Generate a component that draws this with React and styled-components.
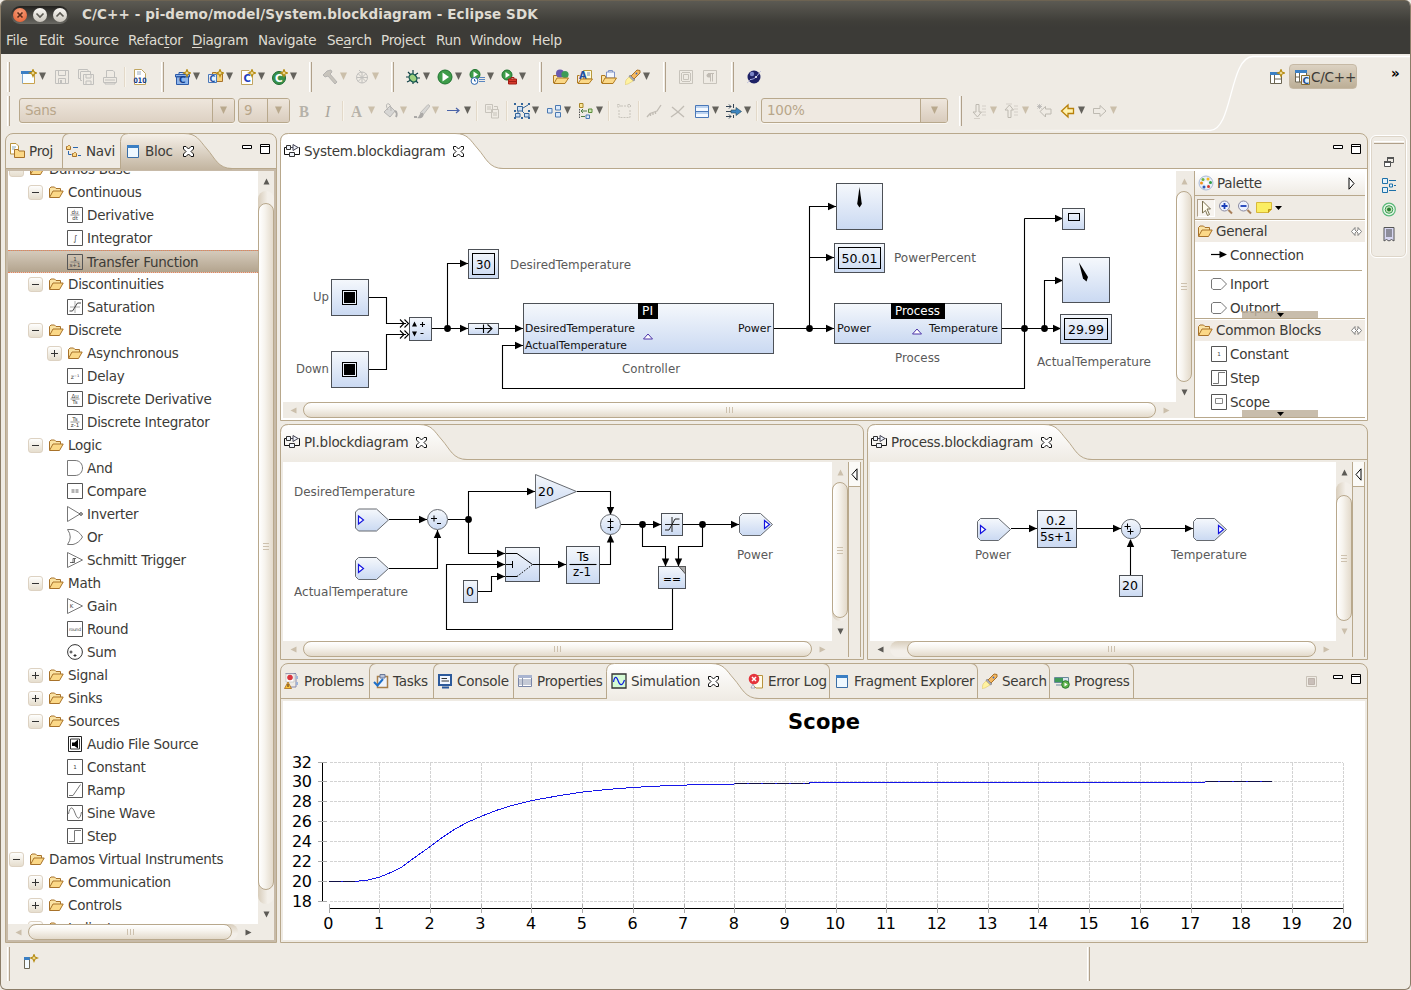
import React from "react";
import styled, { createGlobalStyle, css } from "styled-components";

const C = {
  bg: "#efebe4",
  line: "#b8a88c",
  tan: "#c7baa8",
  text: "#3c3b37",
  dark: "#3c3b37",
};

const Global = createGlobalStyle`
  html, body { margin: 0; padding: 0; background: ${C.bg}; overflow: hidden; }
  * { box-sizing: border-box; }
  body { font: 13.5px "DejaVu Sans", sans-serif; letter-spacing: -0.27px; color: ${C.text}; }
  svg { display: block; flex: none; letter-spacing: 0; }
`;

/* ---------- window frame ---------- */
const Window = styled.div`
  width: 1411px;
  height: 990px;
  border: solid #8b7d68;
  border-width: 0 1px 1px 1px;
  border-radius: 6px;
  background: ${C.bg};
  overflow: hidden;
  display: flex;
  flex-direction: column;
  white-space: nowrap;
`;
const TitleBar = styled.div`
  height: 28px;
  flex: none;
  display: flex;
  align-items: center;
  padding-left: 10px;
  gap: 13px;
  background: linear-gradient(#5c5a53, #3f3e39 75%, #3c3b37);
  border-top: 1px solid #6d6352;
  color: #dfdbd2;
  font-weight: bold;
  font-size: 13.5px;
  letter-spacing: 0.1px;
  > span { padding-bottom: 1px; }
`;
const WindowButtons = styled.div`
  width: 58px;
  height: 18px;
  border-radius: 9px;
  background: linear-gradient(#22211e, #6a6963);
  display: flex;
  align-items: center;
  justify-content: center;
  gap: 6px;
`;
const RoundButton = styled.div`
  width: 14px;
  height: 14px;
  border-radius: 50%;
  background: ${(p) => (p.$close ? "radial-gradient(circle at 50% 30%, #f7a07c, #e3592c)" : "linear-gradient(#fbf9f5, #c9c5bc)")};
`;
const MenuBar = styled.div`
  height: 26px;
  flex: none;
  display: flex;
  align-items: center;
  padding: 0 0 2px 5px;
  background: ${C.dark};
  color: #dfdbd2;
`;
const MenuItem = styled.div`
  width: ${(p) => p.$w}px;
  u { text-underline-offset: 2px; }
`;

/* ---------- tool bars ---------- */
const ToolArea = styled.div`
  position: relative;
  height: 79px;
  flex: none;
  padding: 7px 0 0 6px;
  display: flex;
  flex-direction: column;
  gap: 3px;
`;
const PerspectiveEdge = styled.svg`
  position: absolute;
  left: 0;
  top: 0;
`;
const ToolRow = styled.div`
  position: relative;
  height: 31px;
  display: flex;
  align-items: center;
`;
const ToolGroup = styled.div`
  width: ${(p) => p.$w}px;
  height: 31px;
  flex: none;
  display: flex;
  align-items: center;
`;
const Grip = styled.div`
  width: 3px;
  height: 30px;
  flex: none;
  border-left: 1px solid #fff;
  border-right: 1px solid #b0a08a;
  margin-right: ${(p) => p.$gap ?? 10}px;
`;
const Tool = styled.div`
  width: ${(p) => (p.$menu ? p.$menu : 24)}px;
  height: 24px;
  display: flex;
  align-items: center;
  gap: 1px;
  flex: none;
  opacity: ${(p) => (p.$off ? 0.66 : 1)};
`;
const Sep = styled.div`
  width: 1px;
  height: 20px;
  flex: none;
  margin: 0 7px 0 -2px;
  background: #e3d9c9;
  box-shadow: 1px 0 #f8f4ec;
`;
const ComboBox = styled.div`
  width: ${(p) => p.$w}px;
  height: 25px;
  flex: none;
  margin: 0 ${(p) => p.$gap}px 0 ${(p) => (p.$flat ? -3 : 0)}px;
  border: 1px solid ${C.line};
  border-radius: 3px;
  display: flex;
  background: ${(p) => (p.$flat ? "#efe9e1" : "linear-gradient(#eee6dc, #ddd1c3)")};
  box-shadow: 0 1px #faf7f2;
  color: #b8a68a;
  line-height: 23px;
  overflow: hidden;
`;
const ComboText = styled.div`
  flex: 1;
  padding-left: 5px;
`;
const ComboDrop = styled.div`
  width: ${(p) => p.$w}px;
  border-left: 1px solid ${C.line};
  background: linear-gradient(#eee6dc, #d9ccbd);
  display: grid;
  place-items: center;
`;
const PerspectiveBar = styled.div`
  margin-left: auto;
  display: flex;
  align-items: center;
  width: 141px;
`;
const PerspectiveButton = styled.div`
  width: 68px;
  height: 25px;
  margin: 0 34px 0 4px;
  border: 1px solid #c6b9a5;
  border-radius: 4px;
  background: linear-gradient(#dcd2c2, #bcae96);
  display: flex;
  align-items: center;
  padding-left: 4px;
  gap: 1px;
  letter-spacing: -0.2px;
`;
const Chevron = styled.div`
  color: #000;
  font-weight: bold;
  font-size: 13.5px;
  padding-bottom: 8px;
`;

/* ---------- work bench ---------- */
const Workbench = styled.div`
  flex: none;
  display: flex;
  padding-left: 4px;
`;
const Center = styled.div`
  width: 1088px;
  margin: 0 2px 0 3px;
  display: flex;
  flex-direction: column;
  gap: 3px;
`;
const SideBySide = styled.div`
  display: flex;
  gap: 3px;
`;
const Folder = styled.div`
  width: ${(p) => p.$w}px;
  height: ${(p) => p.$h}px;
  flex: none;
  border: 1px solid ${C.line};
  border-radius: 8px 8px 0 0;
  display: flex;
  flex-direction: column;
`;
const TabBar = styled.div`
  height: 35px;
  flex: none;
  display: flex;
  border-bottom: 1px solid ${C.line};
  position: relative;
`;
const Body = styled.div`
  flex: 1;
  min-height: 0;
  padding: 2px;
  background: ${(p) => p.$tone};
  display: flex;
`;
const Tab = styled.div`
  width: ${(p) => p.$w}px;
  height: 34px;
  flex: none;
  display: flex;
  align-items: center;
  gap: 4px;
  padding-left: ${(p) => p.$pad ?? 3}px;
  position: relative;
  overflow: ${(p) => (p.$side ? "hidden" : "visible")};
  ${(p) => p.$side && css`margin-top: -1px; height: 35px; border-top: 1px solid ${C.line};`}
  ${(p) => p.$side === "left" && css`border-left: 1px solid ${C.line}; border-radius: 7px 0 0 0;`}
  ${(p) => p.$side === "right" && css`border-right: 1px solid ${C.line}; border-radius: 0 7px 0 0;`}
  > * { position: relative; }
  > span { padding-bottom: 1px; }
`;
const TabBackdrop = styled.svg`
  && { position: absolute; }
  left: -1px;
  top: -1px;
`;
const CloseMark = styled.div`
  margin-left: ${(p) => p.$gap}px;
`;
const FolderButtons = styled.div`
  margin-left: auto;
  display: flex;
  gap: 8px;
  padding: 10px 6px 0 0;
  align-items: flex-start;
`;

/* ---------- scroll bars ---------- */
const Bar = styled.div`
  flex: none;
  background: ${C.bg};
  display: flex;
  flex-direction: ${(p) => (p.$v ? "column" : "row")};
  ${(p) => (p.$v ? "width: 16px;" : "height: 16px;")}
  ${(p) => p.$len && (p.$v ? `height: ${p.$len}px;` : `width: ${p.$len}px;`)}
`;
const BarEnd = styled.div`
  width: ${(p) => (p.$v ? 16 : 20)}px;
  height: ${(p) => (p.$v ? 20 : 16)}px;
  flex: none;
  display: grid;
  place-items: center;
`;
const Trough = styled.div`
  flex: 1;
  display: flex;
  flex-direction: ${(p) => (p.$v ? "column" : "row")};
  border-radius: 8px;
  background: linear-gradient(${(p) => (p.$v ? "to right" : "to bottom")}, #d8cdbb, #f3efe9 60%);
`;
const Thumb = styled.div`
  ${(p) => (p.$v ? `width: 16px; height: ${p.$size}px; margin-top: ${p.$at}px;` : `height: 16px; width: ${p.$size}px; margin-left: ${p.$at}px;`)}
  flex: none;
  border: 1px solid ${C.line};
  border-radius: 8px;
  background: linear-gradient(${(p) => (p.$v ? "to right" : "to bottom")}, #fff, #f7f4ee 40%, #e3dacb);
  display: flex;
  flex-direction: ${(p) => (p.$v ? "column" : "row")};
  gap: 2px;
  align-items: center;
  justify-content: center;
`;
const Ridge = styled.i`
  background: #cdc1ae;
  ${(p) => (p.$v ? "width: 6px; height: 1px;" : "width: 1px; height: 6px;")}
`;
const ARROWS = { up: "M.5 6.500L3.500 .5L6.500 6.500Z", down: "M.5 .5H6.500L3.500 6.500Z", left: "M6.500 .5V6.500L.5 3.500Z", right: "M.5 .5V6.500L6.500 3.500Z" };
const Tri = ({ dir, off }) => (
  <svg width="7" height="7"><path d={ARROWS[dir]} fill={off ? "#cbbfab" : "#5c5a55"} /></svg>
);
const Scroll = ({ v, len, at = 0, size, offA, offB }) => (
  <Bar $v={v} $len={len}>
    <BarEnd $v={v}><Tri dir={v ? "up" : "left"} off={offA} /></BarEnd>
    <Trough $v={v}>
      <Thumb $v={v} $size={size} $at={at}><Ridge $v={v} /><Ridge $v={v} /><Ridge $v={v} /></Thumb>
    </Trough>
    <BarEnd $v={v}><Tri dir={v ? "down" : "right"} off={offB} /></BarEnd>
  </Bar>
);

/* ---------- icons ---------- */
const Icon = ({ children, w = 16, h = 16 }) => <svg width={w} height={h} viewBox={`0 0 ${w} ${h}`} fill="none">{children}</svg>;
const Spark = ({ x = 12, y = 4 }) => (
  <path transform={`translate(${x} ${y})`} d="M0-3.500L1-1L3.500 0L1 1L0 3.500L-1 1L-3.500 0L-1-1Z" fill="#fff6c0" stroke="#b58a10" strokeWidth="1.1" />
);
const Down = ({ off }) => <svg width="9" height="9" viewBox="0 0 9 9"><path d="M1 .5H8L4.500 8Z" fill={off ? "#b9a98d" : "#64625c"} /></svg>;
const FolderOpen = () => (
  <Icon>
    <path d="M1.500 13V4.500L3 3h3.500L8 4.500h4.500V7" fill="#fbe3a4" stroke="#a8722a" />
    <path d="M1.500 13.500L5 7h10.200L11.500 13.500Z" fill="#fbd887" stroke="#a8722a" />
  </Icon>
);
const I = {
  new: <Icon><path d="M.5 2.500H13.500V14.500H1.500" fill="#f8fdff" stroke="#c9a24e" /><path d="M0 2H11V5H0Z" fill="#3b7fc4" /><path d="M1.500 5V14.500" stroke="#7da7d0" /><Spark x={12} y={4} /></Icon>,
  save: <Icon><path d="M1.500 1.500H14.500V14.500H1.500Z" stroke="#aaa" /><path d="M4.500 2V6.500H11.500V2M4.500 14V9.500H11.500V14" stroke="#aaa" /><path d="M6 11h2v3H6Z" fill="#aaa" /></Icon>,
  saveAll: <Icon><path d="M.5.5H9.500L10.500 2.500M.5.5V9.500H2M2.500 3V11.500H4M2.500 2.500H12.500V5" stroke="#aaa" /><path d="M5.500 5.500H15.500V15.500H5.500Z" stroke="#aaa" /><path d="M8 6V9H13V6M8 15V12H13V15" stroke="#aaa" /></Icon>,
  print: <Icon><path d="M4.500 8V1.500H11L12.500 3V8" stroke="#aaa" /><path d="M1.500 8.500H14.500V13.500H1.500Z" stroke="#aaa" /><path d="M3 13.500V15H13V13.500M3 11H13" stroke="#aaa" /></Icon>,
  bin: <Icon><path d="M2.500.5H9.500L13.500 4.500V15.500H2.500Z" fill="#fff" stroke="#c0a560" /><path d="M5 3h4M5 5h4" stroke="#9ab" /><text x="1.500" y="14" fontSize="7.500" fontWeight="bold" fill="#113a8a" textLength="13" lengthAdjust="spacingAndGlyphs">010</text></Icon>,
  cProj: <Icon><path d="M1.500 7.500H13.500V15.500H1.500ZM.5 5.500H14.500V8H.5Z" fill="#8db4ea" stroke="#2c5aa8" /><path d="M4 3.500H9V5.500H4Z" fill="#cfe1f8" stroke="#2c5aa8" /><text x="4" y="14" fontSize="9" fontWeight="bold" fill="#153e8a">C</text><Spark x={12} y={4} /></Icon>,
  cFolder: <Icon><path d="M4.500 11V3.500H8L9 5H14.500V12.500H8" fill="#f8d27a" stroke="#a8722a" /><path d="M.5 5.500H8.500V13.500H.5Z" fill="#e6f0fc" stroke="#4b78b8" /><text x="1.500" y="12.500" fontSize="8" fontWeight="bold" fill="#1d4fa0">C</text><Spark x={12} y={4} /></Icon>,
  cFile: <Icon><path d="M1.500 1.500H9L12.500 5V15.500H1.500Z" fill="#fff" stroke="#c0a560" /><text x="3.500" y="13" fontSize="10" fontWeight="bold" fill="#1d3fc0">C</text><Spark x={12} y={4} /></Icon>,
  cClass: <Icon><circle cx="7" cy="9" r="6.500" fill="#37904a" stroke="#1d6b31" /><text x="3" y="13" fontSize="10.500" fontWeight="bold" fill="#fff">C</text><Spark x={12} y={4} /></Icon>,
  hammer: <Icon><path d="M1 6L5 2L9 1L10 3L8 5L15 13L13 15L6 7L3 8Z" fill="#b5b0a8" stroke="#999" /></Icon>,
  world: <Icon><circle cx="8" cy="8.500" r="5.500" stroke="#aaa" /><path d="M4 4.500L12 12.500M4 12.500L12 4.500M8 3V14M2.500 8.500H14M5 1L8 4" stroke="#aaa" /></Icon>,
  bug: <Icon><path d="M3 3L6 6M8 1V5M13 4L10 6M1 8H5M15 9H11M2 13L6 11M13 14L10 11M8 15V11" stroke="#123f46" strokeWidth="1.200" /><ellipse cx="8" cy="9" rx="3.500" ry="4.300" transform="rotate(-40 8 9)" fill="#9ed07e" stroke="#155a50" strokeWidth="1.300" /></Icon>,
  run: <Icon><circle cx="8" cy="8" r="7" fill="#3d9c48" stroke="#1f7330" /><path d="M5.500 3.500L12 8L5.500 12.500Z" fill="#fff" /></Icon>,
  runHist: <Icon><circle cx="6" cy="5.500" r="5" fill="#3d9c48" stroke="#1f7330" /><path d="M4.500 2.500L9 5.500L4.500 8.500Z" fill="#fff" /><circle cx="5.500" cy="12" r="3.400" fill="#fff" stroke="#2a66ae" /><path d="M5.500 10V12H7" stroke="#2a66ae" /><path d="M10 8.500H16M10 10.500H16M10 12.500H16" stroke="#5a86c0" /></Icon>,
  runExt: <Icon><circle cx="6" cy="6" r="5" fill="#3d9c48" stroke="#1f7330" /><path d="M4.500 3L9 6L4.500 9Z" fill="#fff" /><path d="M7.500 10H15.500V15H7.500Z" fill="#d63a2c" stroke="#a01d14" /><path d="M10 10V8.500H13V10M8 12.500H15" stroke="#a01d14" /></Icon>,
  openType: <Icon><path d="M.5 14V6.500H4L5 8" fill="#fbe3a4" stroke="#b07a20" /><circle cx="7" cy="4.500" r="4" fill="#6a5ab0" /><circle cx="12" cy="5.500" r="3.600" fill="#3d9c58" /><path d="M1 14.500L4 9H15.500L12 14.500Z" fill="#fbd887" stroke="#b07a20" /></Icon>,
  openTask: <Icon><path d="M6.500 1.500H14.500V10H6.500Z" fill="#fffbe0" stroke="#b8993c" /><text x="2" y="10" fontSize="10" fontWeight="bold" fill="#1d4fa0">A</text><path d="M10 4h3M10 6h3" stroke="#6d8fc0" /><path d="M1 14.500L4 10H15.500L12 14.500Z" fill="#fbd887" stroke="#b07a20" /><path d="M.5 14V6.500H2.500" stroke="#b07a20" /></Icon>,
  openRes: <Icon><path d="M.5 14V6.500H4L5 9" fill="#fbe3a4" stroke="#b07a20" /><path d="M5.500 3H13.500V9H5.500Z" fill="#f3f6fd" stroke="#7f93c8" /><path d="M7.500 3V1.500H11.500V3" stroke="#7f93c8" /><path d="M1 14.500L4 9H15.500L12 14.500Z" fill="#fbd887" stroke="#b07a20" /></Icon>,
  torch: <Icon><path d="M6 7L12 1L15 1.500L15 4L9 10Z" fill="#f5b860" stroke="#a8722a" /><path d="M5 6L10 11L8 12L4 8Z" fill="#a9a9b4" stroke="#777" strokeWidth=".6" /><path d="M4 8L8 12L3 15L0 15.500L1 11Z" fill="#fff2a0" stroke="#d8c060" strokeWidth=".5" /><circle cx="11.500" cy="4.500" r=".9" fill="#3b6bc0" /></Icon>,
  block: <Icon><path d="M1.500 1.500H14.500V14.500H1.500Z" stroke="#b3afa6" /><path d="M5.500 5.500H10.500V10.500H5.500ZM4 3.500H12M4 12.500H12M3.500 4V12M12.500 4V12" stroke="#b3afa6" /></Icon>,
  para: <Icon><path d="M1.500 1.500H14.500V14.500H1.500Z" stroke="#b3afa6" /><path d="M9 4.500H6.500A2 2 0 0 0 6.500 8.500H8Z" fill="#aaa59c" /><path d="M6 4.500H12M8.500 4.500V12.500M10.500 4.500V12.500" stroke="#aaa59c" /></Icon>,
  sphere: <Icon><circle cx="8" cy="8" r="6.500" fill="#1f2266" /><circle cx="6" cy="5" r="2.200" fill="#7b86c8" /><path d="M1 14L4 11.500M12.500 4.500L15 2" stroke="#c5c5dc" /><path d="M4 10.500C7 10.500 10 9 12.500 5" stroke="#b0b6e8" /><circle cx="10" cy="8" r="1" fill="#fff" /></Icon>,
  bold: <Icon><text x="3" y="13.500" fontFamily="Liberation Serif" fontWeight="bold" fontSize="16" textLength="10" lengthAdjust="spacingAndGlyphs" fill="#9a958c">B</text></Icon>,
  italic: <Icon><text x="5" y="13.500" fontFamily="Liberation Serif" fontStyle="italic" fontSize="16" fill="#87837a">I</text></Icon>,
  fontA: <Icon><text x="1" y="13.500" fontFamily="Liberation Serif" fontWeight="bold" fontSize="16" textLength="11" lengthAdjust="spacingAndGlyphs" fill="#9a958c">A</text></Icon>,
  fill: <Icon><path d="M2 9L8 3L13 8L8 14Z" fill="#ccc" stroke="#999" /><path d="M6 7C3 2 5 0 7 1S9 6 9 8" stroke="#999" /><path d="M13 8C15 9 15 12 14 14" stroke="#888" strokeWidth="2" /></Icon>,
  brush: <Icon><path d="M6 10L14 1.500L16 3L9 12Z" fill="#ccc" stroke="#999" strokeWidth=".8" /><path d="M9 10C5 9 6 14 3 15C7 16 11 14 9 10Z" fill="#888" /><path d="M0 14H3" stroke="#888" strokeWidth="2" /></Icon>,
  lineStyle: <Icon><path d="M1 7.500H13M10 5L13 7.500L10 10" stroke="#4a63a8" strokeWidth="1.200" /></Icon>,
  copyApp: <Icon><path d="M1.500 1.500H8.500V9.500H1.500ZM7.500 6.500H14.500V15H7.500ZM3 4H7M3 6H7M9 10H13M9 12H13M10 3.500H13.500V6" stroke="#b3afa6" /></Icon>,
  select: <Icon><path d="M8 8L11 11M9 5L14 2M4 8L4 10" stroke="#34659a" /><path d="M3.500 3.500H8.500V8H3.500ZM1.500 10.500H6V14H1.500ZM10.500 10.500H15V14H10.500Z" fill="#cfe0f4" stroke="#34659a" /><path d="M0 0h2v2H0ZM14 0h2v2h-2ZM0 14h2v2H0ZM14 14h2v2h-2ZM7 0h2v2H7ZM0 7h2v2H0ZM14 7h2v2h-2ZM7 14h2v2H7Z" fill="#34659a" /></Icon>,
  arrange: <Icon><path d="M1.500 5.500H6V10H1.500ZM9.500 2.500H14.500V7H9.500ZM9.500 9.500H14.500V14H9.500Z" fill="#dbe9fa" stroke="#4a78b0" /></Icon>,
  align: <Icon><path d="M1.500.5H5V4.500H1.500Z" fill="#fbe79a" stroke="#a8862a" /><path d="M10.500 6H14V9.500H10.500Z" fill="#cbe6b0" stroke="#5a8a3a" /><path d="M8 12H11.500V15.500H8Z" fill="#dbe9fa" stroke="#4a78b0" /><path d="M1.500 6V16" stroke="#555" strokeDasharray="1.500 1" /><path d="M3 8H9M3 13.500H7M5 6L3 8L5 10" stroke="#4f7f45" /></Icon>,
  autosize: <Icon><path d="M1.500 1.500H4V4H1.500ZM12 1.500H14.500V4H12ZM3 7V14.500H14V7" stroke="#b3afa6" strokeDasharray="2 1" /><path d="M5 3H12" stroke="#b3afa6" strokeDasharray="2 1" /></Icon>,
  route1: <Icon><path d="M1 14L4 10.500L11 8L15 2M4.500 13V10.500M7 12V9.500M9.500 11V8.500" stroke="#aaa59c" strokeWidth="1.300" /></Icon>,
  route2: <Icon><path d="M2 4L14 14M1 14L8 9L14 3" stroke="#aaa59c" strokeWidth="1.300" /></Icon>,
  compart: <Icon><path d="M1.500 2.500H14.500V14.500H1.500ZM1.500 8.500H14.500" fill="#f4f9ff" stroke="#4a78b8" /><path d="M2 3H14V5H2ZM2 9H14V11H2Z" fill="#bcd3f0" /></Icon>,
  routing: <Icon><path d="M0 3.500H5M3 1.500L5 3.500L3 5.500M0 8.500H8M0 13.500H5M3 11.500L5 13.500L3 15.500M7.500 1V5M7.500 12V15" stroke="#345" /><path d="M5 7H10V4.500L15.500 8.500L10 12.500V10H5Z" fill="#3f86c0" stroke="#245" strokeWidth=".6" /></Icon>,
  nextAnn: <Icon><path d="M4 1.500H7V9H9.500L5.500 14L1 9H4Z" stroke="#a5a198" /><path d="M10 3H14M10 6H14M10 9H14M10 12H14M2 15.500H8" stroke="#c8c3ba" /></Icon>,
  prevAnn: <Icon><path d="M4 14.500H7V7H9.500L5.500 2L1 7H4Z" stroke="#a5a198" /><path d="M10 3H14M10 6H14M10 9H14M10 12H14M2 1H8" stroke="#c8c3ba" /></Icon>,
  lastEdit: <Icon><path d="M15 6V11H9.500V14L4 8.500L9.500 3.500V6Z" stroke="#a5a198" /><path d="M3.500 1V6M1 3.500H6M1.500 1.500L5.500 5.500M5.500 1.500L1.500 5.500" stroke="#999" strokeWidth=".8" /></Icon>,
  back: <Icon><path d="M13.500 5.500V10.500H8V14L1.500 8L8 2V5.500Z" fill="#fff3b0" stroke="#b8800a" strokeWidth="1.300" /></Icon>,
  forward: <Icon><path d="M1.500 5.500V10.500H8V13.500L14 8L8 2.500V5.500Z" stroke="#a5a198" /></Icon>,
  openPersp: <Icon><path d="M1.500 4H12.500V14.500H1.500Z" fill="#fff" stroke="#6b6552" /><path d="M1 3H12V6H1Z" fill="#3b7fc4" /><path d="M5.500 6V14M5.500 10H12" stroke="#6b6552" /><Spark x={12} y={4} /></Icon>,
  cPersp: <Icon><path d="M1.500 1.500H12.500V13H1.500Z" fill="#fff" stroke="#6b6552" /><path d="M1 1H13V4H1Z" fill="#3b7fc4" /><path d="M5.500 4V13M1.500 8H6" stroke="#6b6552" /><path d="M7.500 6.500H15.500V15.500H7.500Z" fill="#e4f0fc" stroke="#8a6d2c" /><text x="8.500" y="14.500" fontSize="9" fontWeight="bold" fill="#1d4f90">C</text></Icon>,
  proj: <Icon><path d="M1.500.5H7L9.500 3V11H1.500Z" fill="#fff" stroke="#b8933c" /><path d="M3 4H7M3 6H6" stroke="#8ab" /><path d="M5.500 14.500V6.500H9L10 8H15.500V14.500Z" fill="#fbd887" stroke="#a8722a" /></Icon>,
  navi: <Icon><path d="M.5 3.500H1.500L2.500 2.500H3.500L4.500 3.500V6.500H.5ZM6.500 10.500H7.500L8.500 9.500H9.500L10.500 10.500V13.500H6.500Z" fill="#fbd887" stroke="#a8722a" /><path d="M2.500 8V11.500H5.500M7 4.500H12M12 12.500H15" stroke="#2a66ae" /></Icon>,
  view: <Icon><path d="M2.500 2.500H13.500V14.500H2.500Z" fill="#eef8ff" stroke="#3a6ea5" /><path d="M2 2H14V5H2Z" fill="#3b7fc4" /></Icon>,
  diagram: <Icon><path d="M2 4.500H.5V11.500H5.500M14.500 4.500H15.500V11.500H10.500" stroke="#111" /><path d="M2.500 2.500H6.500V6.500H2.500ZM5.500 9.500H10.500V13.500H5.500Z" fill="#f0f4fb" stroke="#333" /><path d="M9 1.500L14 4.500L9 7.500ZM6.500 4.500H9" fill="#f0f4fb" stroke="#445" /></Icon>,
  problems: <Icon><path d="M1.500.5H12M12 1V14H4" stroke="#88a" /><path d="M2 1H10V9H2Z" fill="#fff" stroke="#bbb" strokeWidth=".7" /><circle cx="6" cy="4.500" r="2.800" fill="#d9363e" /><path d="M4 9L7.500 15.500H.5Z" fill="#f9c43a" stroke="#a86a1a" strokeWidth=".8" /><path d="M4 11V14" stroke="#422" /><path d="M12 3H14V6H12ZM12 9H14V12H12Z" fill="#9fb4d8" /></Icon>,
  tasks: <Icon><path d="M4.500 3.500H14.500V14.500H4.500Z" fill="#eef3fb" stroke="#a87f4a" strokeWidth="1.500" /><path d="M7 1.500H12V5H7Z" fill="#b8c2d8" stroke="#6a7898" /><path d="M1 9L4.500 12.500L10 6" stroke="#1d6fc8" strokeWidth="2" /></Icon>,
  console: <Icon><path d="M2 2H14V12H2Z" fill="#f2f7ff" stroke="#2d5a9b" strokeWidth="2" /><path d="M4.500 5.500H10M4.500 8H12" stroke="#333" /><path d="M5 14.500H12" stroke="#2d5a9b" strokeWidth="2" /></Icon>,
  props: <Icon><path d="M1.500 2.500H14.500V13.500H1.500Z" fill="#fff" stroke="#7a86a8" /><path d="M1 2H15V5H1Z" fill="#a9b4d0" /><path d="M2 7H14M2 9H14M2 11H14M5.500 5V13.500" stroke="#8a94ac" /></Icon>,
  sim: <Icon><path d="M1 1H15V15H1Z" fill="#d5fbd5" stroke="#333" strokeWidth="1.300" /><path d="M2.500 9C3.500 3 5.500 3 7 7.500S11 14 13.500 7" stroke="#1020e0" strokeWidth="1.200" /></Icon>,
  error: <Icon><path d="M7.500 2.500H14.500V15H8L5 12" fill="#fffbe8" stroke="#b8933c" /><circle cx="6" cy="6" r="5.300" fill="#e5343c" /><path d="M4 4L8 8M8 4L4 8" stroke="#fff" strokeWidth="1.500" /><path d="M5 11L7 15H3Z" fill="#fff" stroke="#88a" strokeWidth=".7" /></Icon>,
  progress: <Icon><path d="M.5 4.500H14.500V9.500H.5Z" fill="#dce6f0" stroke="#6a8a9a" /><path d="M1 5H9V9H1Z" fill="#3f9a58" /><path d="M2 12H8" stroke="#6a8a9a" /><circle cx="11.500" cy="11.500" r="3.800" fill="#5fb34a" stroke="#2b7a30" /><path d="M10.500 9.500L13.500 11.500L10.500 13.500Z" fill="#fff" /></Icon>,
  palette: <Icon><circle cx="8" cy="8" r="7" fill="#e9eff8" stroke="#a9bad6" /><circle cx="5" cy="4.500" r="1.500" fill="#6db33f" /><circle cx="10" cy="4" r="1.500" fill="#f5b81c" /><circle cx="12.500" cy="7.500" r="1.500" fill="#2f9e44" /><circle cx="3.500" cy="8" r="1.500" fill="#f5921c" /><circle cx="6" cy="12" r="1.500" fill="#2b5ab8" /><circle cx="10.500" cy="11.500" r="1.500" fill="#d33a2c" /><circle cx="8" cy="8" r="1.800" fill="#fff" /></Icon>,
  cursor: <Icon><path d="M4.500 1L12.500 9H9L11.500 14.500L9.500 15.500L7.500 10.500L4.500 13Z" fill="#fffdf0" stroke="#7a7050" /></Icon>,
  zoomIn: <Icon><circle cx="6.500" cy="6" r="5" fill="#eef3ff" stroke="#8a8aa0" /><path d="M6.500 3V9M3.500 6H9.500" stroke="#1a3fb8" strokeWidth="1.800" /><path d="M10.500 10L14 13.500" stroke="#a8805a" strokeWidth="2" /></Icon>,
  zoomOut: <Icon><circle cx="6.500" cy="6" r="5" fill="#eef3ff" stroke="#8a8aa0" /><path d="M3.500 6H9.500" stroke="#1a3fb8" strokeWidth="1.800" /><path d="M10.500 10L14 13.500" stroke="#a8805a" strokeWidth="2" /></Icon>,
  note: <Icon><path d="M.5 2.500H15.500V9L12.500 12.500H.5Z" fill="#fbee62" stroke="#d8b83a" /><path d="M15.500 9.500H12.500V12.500" fill="#d8b020" stroke="#b8901a" /></Icon>,
  connection: <Icon><path d="M0 7.500H9" stroke="#000" strokeWidth="1.200" /><path d="M8.500 4L16 7.500L8.500 11Z" fill="#000" /></Icon>,
  port: <Icon><path d="M2 2.500H10L15.500 8L10 13.500H2L.5 12V4Z" fill="#fff" stroke="#777" /></Icon>,
  restore: <Icon><path d="M6.500 3.500H12.500V8.500H6.500Z" stroke="#555" /><path d="M6 4H13" stroke="#555" strokeWidth="2" /><path d="M3.500 7.500H9.500V12.500H3.500Z" fill="#fff" stroke="#555" /><path d="M3 8H10" stroke="#555" strokeWidth="2" /></Icon>,
  outline: <Icon><path d="M1.500.5H6.500V5.500H1.500ZM1.500 9.500H6.500V14.500H1.500ZM8.500 6H11.500V9H8.500Z" fill="#e2f1fb" stroke="#1d70a8" /><path d="M8 2.500H15M8 12.500H15M13 7.500H15" stroke="#1d70a8" strokeWidth="1.200" /></Icon>,
  target: <Icon><circle cx="8" cy="7.500" r="6.300" fill="#e8f7ea" stroke="#5ab878" strokeWidth="1.200" /><circle cx="8" cy="7.500" r="3.800" fill="#c9e8c0" stroke="#3a9a50" /><circle cx="8" cy="7.500" r="2" fill="#2b7d30" /></Icon>,
  doc: <Icon><path d="M3 1.500H13V15L10.500 13.500L8 15L5.500 13.500L3 15Z" fill="#d7d6f0" stroke="#555" /><path d="M5 4H11M5 6H11M5 8H11M5 10H11" stroke="#444" /></Icon>,
};

const Sq = ({ children }) => <Icon><path d="M.5.5H15.500V15.500H.5Z" stroke="#555" />{children}</Icon>;
const tiny = { fontSize: 5.5, fill: "#444", textAnchor: "middle" };
const frac = (a, b) => <Sq><text x="8" y="6.500" {...tiny}>{a}</text><path d="M3.500 8H12.500" stroke="#777" strokeWidth=".8" /><text x="8" y="13.300" {...tiny}>{b}</text></Sq>;
const B = {
  derivative: frac("du", "dt"),
  integrator: <Sq><text x="8" y="11" {...tiny} fontSize="8">∫</text></Sq>,
  transfer: frac("1", "s+1"),
  saturation: <Sq><path d="M8 2V14M3 8H13" stroke="#888" strokeWidth=".7" /><path d="M2.500 12H5.500L10.500 4H14" stroke="#444" /></Sq>,
  delay: <Sq><text x="8" y="11" {...tiny} fontSize="6">z⁻¹</text></Sq>,
  dDer: frac("Δu", "Ts"),
  dInt: frac("Ts", "z-1"),
  and: <Icon><path d="M.5.500H8C18 .5 18 15.500 8 15.500H.5Z" stroke="#777" /></Icon>,
  compare: <Sq><path d="M4.500 7H7.500M8.500 7H11.500M4.500 9H7.500M8.500 9H11.500" stroke="#555" strokeWidth=".9" /></Sq>,
  inverter: <Icon><path d="M.5.500L13 8L.5 15.500Z" stroke="#777" /><circle cx="14" cy="8" r="1.300" stroke="#444" /></Icon>,
  or: <Icon><path d="M.5.500H6Q12 2 15.500 8Q12 14 6 15.500H.5Q6 8 .5.500Z" stroke="#777" /></Icon>,
  schmitt: <Icon><path d="M.5.500L15.500 8L.5 15.500Z" stroke="#777" /><path d="M3 10.500H6V6.500H9M5 10.500H7.500V6.500" stroke="#444" strokeWidth=".8" /></Icon>,
  gain: <Icon><path d="M.5.500L15.500 8L.5 15.500Z" stroke="#777" /><text x="4.500" y="10" {...tiny}>K</text></Icon>,
  round: <Sq><text x="8" y="9.500" {...tiny} fontSize="4.500" textLength="12">round</text></Sq>,
  sum: <Icon><circle cx="8" cy="8" r="7.400" stroke="#333" /><path d="M2.500 8H5.500M4 6.500V9.500M6.500 11.500H9.500M8 10V13" stroke="#333" /></Icon>,
  audio: <Icon><path d="M1.500.500H14.500V15.500H1.500Z" stroke="#222" /><path d="M3.500 3H12.500V13H3.500Z" stroke="#333" /><path d="M5 6.500H7.500L11 3.500V12.500L7.500 10H5Z" fill="#000" /></Icon>,
  constant: <Sq><text x="8" y="10" {...tiny}>1</text></Sq>,
  ramp: <Sq><path d="M2 13.500H6L13.500 2.500" stroke="#777" /></Sq>,
  sine: <Sq><path d="M1.500 9C3 1 5.500 1 8 8S13 15 14.500 7" stroke="#777" /></Sq>,
  step: <Sq><path d="M2 13.500H7.500V2.500H14" stroke="#777" /></Sq>,
  scope: <Sq><path d="M4.500 4.500H11.500V9.500H4.500Z" stroke="#888" /></Sq>,
};

const CloseIcon = () => (
  <Icon w={11} h={11}><path d="M.5.500H3L5.500 3L8 .5H10.500V3L8 5.500L10.500 8V10.500H8L5.500 8L3 10.500H.5V8L3 5.500L.5 3Z" fill="#fff" stroke="#111" /></Icon>
);
const MinIcon = () => <Icon w={10} h={11}><path d="M.5 1.500H9.500V4.500H.5Z" fill="#fff" stroke="#000" /></Icon>;
const MaxIcon = () => <Icon w={10} h={11}><path d="M.5.500H9.500V9.500H.5Z" fill="#fff" stroke="#000" /><path d="M0 2.500H10" stroke="#000" /></Icon>;

const GRADS = { white: ["#ffffff", "#ffffff"], plain: ["#ffffff", "#efebe4"], tan: ["#f6f1ea", "#c2b49f"] };
const ActiveTab = ({ w, flat, tone, icon, label, closeGap, first, pad }) => {
  const id = `tab-${tone}-${label.length}`;
  const d = `C${flat + 13} .5 ${flat + 15} 7 ${flat + 23} 16S${flat + 34} 35.500 ${flat + 48} 35.500`;
  return (
    <Tab $w={w} $pad={pad}>
      <TabBackdrop width={flat + 50} height="37" fill="none">
        <defs><linearGradient id={id} x2="0" y2="1"><stop stopColor={GRADS[tone][0]} /><stop offset="1" stopColor={GRADS[tone][1]} /></linearGradient></defs>
        <path d={`M.5 37V8.500Q.5.500 8.500.500H${flat}${d}V37Z`} fill={`url(#${id})`} />
        <path d={`M.5 ${first ? 37 : 36}V8.500Q.5.500 8.500.500H${flat}${d}`} stroke={C.line} />
      </TabBackdrop>
      {icon}<span>{label}</span>
      <CloseMark $gap={closeGap}><CloseIcon /></CloseMark>
    </Tab>
  );
};

/* ---------- tree ---------- */
const Column = styled.div`
  display: flex;
  flex-direction: column;
  flex: ${(p) => (p.$w ? "none" : 1)};
  width: ${(p) => (p.$w ? `${p.$w}px` : "auto")};
  min-width: 0;
  background: ${C.bg};
`;
const Tree = styled.div`
  height: 753px;
  overflow: hidden;
  background: #fff;
`;
const TreeRows = styled.div`
  margin-top: -13px;
`;
const TreeRow = styled.div`
  height: 23px;
  display: flex;
  align-items: center;
  padding: 0 0 1px ${(p) => p.$level * 19 + 1}px;
  ${(p) => p.$on && css`background: linear-gradient(#d5cabb, #b3a48e); border: dotted #e8825c; border-width: 1px 0; padding-bottom: 0;`}
  > svg { margin-right: 4px; }
`;
const Expander = styled.div`
  width: 15px;
  height: 15px;
  margin-right: 5px;
  border-radius: 3px;
  display: grid;
  place-items: center;
  ${(p) => !p.$none && "border: 1px solid #ddd2c2; background: linear-gradient(#fefefd, #e6dece);"}
`;
const TREE = [
  [0, "-", "Damos Base"], [1, "-", "Continuous"], [2, "derivative", "Derivative"], [2, "integrator", "Integrator"], [2, "transfer", "Transfer Function"],
  [1, "-", "Discontinuities"], [2, "saturation", "Saturation"], [1, "-", "Discrete"], [2, "+", "Asynchronous"], [2, "delay", "Delay"],
  [2, "dDer", "Discrete Derivative"], [2, "dInt", "Discrete Integrator"], [1, "-", "Logic"], [2, "and", "And"], [2, "compare", "Compare"],
  [2, "inverter", "Inverter"], [2, "or", "Or"], [2, "schmitt", "Schmitt Trigger"], [1, "-", "Math"], [2, "gain", "Gain"], [2, "round", "Round"],
  [2, "sum", "Sum"], [1, "+", "Signal"], [1, "+", "Sinks"], [1, "-", "Sources"], [2, "audio", "Audio File Source"], [2, "constant", "Constant"],
  [2, "ramp", "Ramp"], [2, "sine", "Sine Wave"], [2, "step", "Step"], [0, "-", "Damos Virtual Instruments"], [1, "+", "Communication"],
  [1, "+", "Controls"], [1, "+", "Indicators"],
];

/* ---------- palette ---------- */
const Canvas = styled.svg`
  background: #fff;
`;
const PaletteBox = styled.div`
  width: 171px;
  border-left: 1px solid ${C.line};
  margin-left: 2px;
  display: flex;
  flex-direction: column;
  background: #fff;
  box-shadow: -2px 0 ${C.bg};
`;
const PaletteTitle = styled.div`
  height: 25px;
  flex: none;
  display: flex;
  align-items: center;
  gap: 3px;
  padding: 0 10px 0 3px;
  background: linear-gradient(#fff, #efebe4);
  border-bottom: 1px solid ${C.line};
  > :last-child { margin-left: auto; }
`;
const PaletteTools = styled.div`
  height: 24px;
  flex: none;
  display: flex;
  align-items: center;
  padding-left: 2px;
  gap: 3px;
  background: ${C.bg};
  border-bottom: 1px solid ${C.line};
`;
const PressedTool = styled.div`
  width: 18px;
  height: 18px;
  border: 1px solid;
  border-color: #b0a08a #fff #fff #b0a08a;
  background: #f7f4ef;
`;
const Drawer = styled.div`
  position: relative;
  height: ${(p) => p.$h}px;
  flex: none;
  overflow: hidden;
  border-bottom: 1px solid ${C.line};
`;
const DrawerTitle = styled.div`
  height: 21px;
  margin-top: 1px;
  display: flex;
  align-items: center;
  gap: 3px;
  padding: 0 3px 1px 2px;
  background: #f1ece5;
  > :last-child { margin-left: auto; }
`;
const PaletteItem = styled.div`
  height: 24px;
  margin-top: ${(p) => p.$mt || 0}px;
  display: flex;
  align-items: center;
  gap: 3px;
  padding-left: 16px;
`;
const PaletteRule = styled.div`
  height: 1px;
  margin: 3px 3px 1px;
  background: ${C.line};
`;
const DrawerScroll = styled.div`
  position: absolute;
  left: 47px;
  bottom: 0;
  width: 76px;
  height: 7px;
  background: rgba(190, 178, 158, 0.85);
  display: grid;
  place-items: center;
`;
const Pin = () => <Icon w={11} h={9}><path d="M4 .5L.5 4.500L4 8.500V6L5.500 4.500L4 3ZM7 .5L10.500 4.500L7 8.500V6L5.500 4.500L7 3Z" fill="#fff" stroke="#777" strokeWidth=".9" /></Icon>;
const SmallDown = () => <Icon w={7} h={4}><path d="M0 0H7L3.500 4Z" fill="#000" /></Icon>;
const Flyout = styled.div`
  width: 13px;
  flex: none;
  border: solid ${C.line};
  border-width: 0 1px;
  background: ${C.bg};
`;
const FlyoutButton = styled.div`
  height: 25px;
  background: #fbfaf7;
  border-bottom: 1px solid ${C.line};
  display: grid;
  place-items: center;
`;

/* ---------- right trim and status line ---------- */
const Trim = styled.div`
  width: 37px;
  height: 123px;
  margin-top: 2px;
  border: 1px solid #fff;
  border-radius: 6px;
  box-shadow: inset 0 0 0 1px #ddd5c8;
  display: flex;
  flex-direction: column;
  align-items: center;
`;
const TrimGrip = styled.div`
  width: 30px;
  height: 3px;
  margin: 5px 0 6px;
  border-top: 1px solid #fff;
  border-bottom: 1px solid #b0a08a;
`;
const TrimItem = styled.div`
  height: 24px;
  display: flex;
  align-items: center;
`;
const StatusBar = styled.div`
  flex: 1;
  display: flex;
  padding: 4px 0 0 6px;
`;
const StatusGrip = styled(Grip)`
  height: 34px;
  margin-right: 0;
`;
const StatusSlot = styled.div`
  width: 1077px;
  padding: 7px 0 0 13px;
`;

/* ---------- diagram primitives ---------- */
const T = ({ x, y, w, s = 12, fill = "#5a5a5a", children, anchor }) => (
  <text x={x} y={y} fontSize={s} fill={fill} textLength={w} lengthAdjust="spacingAndGlyphs" textAnchor={anchor} stroke="none">{children}</text>
);
const Blk = ({ x, y, w, h, g }) => <rect x={x} y={y} width={w} height={h} fill={`url(#${g})`} stroke="#4d5157" />;
const Wire = ({ d }) => <path d={d} stroke="#000" fill="none" strokeWidth="1.100" />;
const HEAD = { r: "M0 0L-8-3.700V3.700Z", d: "M0 0L-3.700-8H3.700Z", u: "M0 0L-3.700 8H3.700Z" };
const Head = ({ x, y, to = "r" }) => <path d={HEAD[to]} transform={`translate(${x} ${y})`} fill="#000" />;
const Dot = ({ x, y }) => <circle cx={x} cy={y} r="3.400" fill="#000" />;
const BlueGrad = ({ id }) => <defs><linearGradient id={id} x2="0" y2="1"><stop stopColor="#f5f8fc" /><stop offset="1" stopColor="#cad9f2" /></linearGradient></defs>;
const Button = ({ y }) => <><Blk x={331.5} y={y} w={37} h={36} g="g1" /><rect x="342.500" y={y + 11} width="14" height="14" fill="#eef3fb" stroke="#000" /><rect x="344" y={y + 12.5} width="11" height="11" fill="#000" /></>;
const Display = ({ x, y, w, h = 29, ix = 4, iy = 4, label, lw }) => (
  <><Blk x={x} y={y} w={w} h={h} g="g1" /><rect x={x + ix} y={y + iy} width={w - 2 * ix} height={h - 2 * iy} fill="none" stroke="#000" strokeWidth="1" /><T x={x + w / 2} y={y + h / 2 + 4.5} s={12.5} w={lw} fill="#000" anchor="middle">{label}</T></>
);
const Sub = ({ x, y }) => <path d={`M${x - 4.500} ${y + 2}L${x} ${y - 3}L${x + 4.500} ${y + 2}Z`} fill="#fff" stroke="#4c33a8" />;
const Port = ({ x, y, out, g }) => (
  <><path d={`M${x + 3} ${y - 11}H${x + 21}L${x + 33} ${y}L${x + 21} ${y + 11}H${x + 3}L${x} ${y + 8}V${y - 8}Z`} fill={`url(#${g})`} stroke="#666a70" />
    <path d={`M${x + (out ? 25 : 3)} ${y - 4}L${x + (out ? 30 : 8)} ${y}L${x + (out ? 25 : 3)} ${y + 4}Z`} fill="#fff" stroke="#1414e0" strokeWidth="1.200" /></>
);

const SystemDiagram = () => (
  <Canvas width="893" height="231" viewBox="283 171 893 231">
    <BlueGrad id="g1" />
    <Button y={279.5} /><Button y={351.5} />
    <T x={313} y={301} w={16}>Up</T><T x={296} y={373} w={33}>Down</T>
    <Wire d="M369 297.500H386.500V323.500H406M369 369.500H386.500V334.500H406" />
    <Wire d="M400 319.500L404 323.500L400 327.500M404.500 319.500L408.500 323.500L404.500 327.500M400 330.500L404 334.500L400 338.500M404.500 330.500L408.500 334.500L404.500 338.500" />
    <Blk x={409.5} y={317.5} w={22} h={23} g="g1" />
    <path d="M412 326.500L414.500 321.500L417 326.500ZM412 331.500H417L414.500 336.500Z" /><Wire d="M420 324.500H425M422.500 322V327M420.500 333.500H423.500" />
    <Wire d="M432 328.500H468M447.500 328.500V263.500H468M499 328.500H523" />
    <Dot x={447.5} y={328.5} /><Head x={468} y={328.5} /><Head x={468} y={263.5} /><Head x={523} y={328.5} />
    <Display x={468.5} y={249.5} w={30} label="30" iy={4} lw={15} />
    <T x={510} y={269} w={121}>DesiredTemperature</T>
    <Blk x={468.5} y={323.5} w={30} h={11} g="g1" /><Wire d="M475 328.500H491M483.500 324.500V333M487.500 324.500L492 328.500L487.500 333" />
    <Blk x={523.5} y={303.5} w={250} h={50} g="g1" />
    <rect x="638" y="303" width="20" height="16" /><T x={642} y={315} w={11} fill="#fff">PI</T>
    <T x={525} y={332} w={110} s={11} fill="#111">DesiredTemperature</T><T x={525} y={349} w={102} s={11} fill="#111">ActualTemperature</T><T x={738} y={332} w={33} s={11} fill="#111">Power</T>
    <Sub x={648} y={337} /><T x={622} y={373} w={58}>Controller</T>
    <Wire d="M774 328.500H834M809.500 328.500V206.500H836M809.500 257.500H834" /><Dot x={809.5} y={328.5} /><Head x={836} y={206.5} /><Head x={834} y={257.5} /><Head x={834} y={328.5} />
    <Blk x={836.5} y={183.5} w={46} h={46} g="g1" /><path d="M859.500 187L861.800 204L859.500 207.500L857.200 204Z" />
    <Display x={834.5} y={243.5} w={50} label="50.01" lw={36} /><T x={894} y={262} w={82}>PowerPercent</T>
    <Blk x={834.5} y={303.5} w={167} h={40} g="g1" /><rect x="891" y="303" width="54" height="16" /><T x={895} y={315} w={45} fill="#fff">Process</T>
    <T x={837} y={332} w={34} s={11} fill="#111">Power</T><T x={929} y={332} w={69} s={11} fill="#111">Temperature</T><Sub x={917} y={332} /><T x={895} y={362} w={45}>Process</T>
    <Wire d="M1002 328.500H1060M1024.500 218.500V388.500H502.500V345.500H523M1024.500 218.500H1062M1044.500 328.500V280.500H1062" />
    <Dot x={1024.5} y={328.5} /><Dot x={1044.5} y={328.5} /><Head x={1063} y={218.5} /><Head x={1063} y={280.5} /><Head x={1061} y={328.5} /><Head x={523} y={345.5} />
    <Blk x={1062.5} y={208.500} w={22} h={21} g="g1" /><rect x="1068.500" y="213.500" width="11" height="7" fill="none" stroke="#000" />
    <Blk x={1062.5} y={257.5} w={47} h={45} g="g1" /><path d="M1079 262.500L1088 277L1086.500 281.500L1083 278.500Z" />
    <Display x={1060.5} y={314.5} w={51} label="29.99" lw={36} /><T x={1037} y={366} w={114}>ActualTemperature</T>
  </Canvas>
);

const PIDiagram = () => (
  <Canvas width="549" height="179" viewBox="283 462 549 179">
    <BlueGrad id="g2" />
    <T x={294} y={496} w={121}>DesiredTemperature</T><T x={294} y={596} w={114}>ActualTemperature</T><T x={737} y={559} w={36}>Power</T>
    <Wire d="M389 519.500H427M389 568.500H437.500V530M448 519.500H468.500M535 491.500H468.500V553.500H505M577 491.500H610.500V514M540 564.500H566M600 564.500H610.500V536M621 524.500H661M642.500 524.500V546.500H665.500V566M683 524.500H739M702.500 524.500V546.500H678.500V566M672.500 589V629.500H446.500V564.500H505M478 591.500H491.500V576.500H505" />
    <Port x={355.500} y={520} g="g2" /><Port x={355.500} y={568.500} g="g2" /><Port x={739.500} y={524.500} g="g2" out />
    <circle cx="437.500" cy="519.500" r="10" fill="url(#g2)" stroke="#666a70" /><path d="M431 518.500H437M434 515.500V521.500M437 523.500H441" stroke="#000" />
    <Head x={427} y={519.5} /><Head x={437.5} y={530} to="u" /><Dot x={468.5} y={519.500} /><Head x={535} y={491.5} /><Head x={505} y={553.5} /><Head x={505} y={564.500} /><Head x={505} y={576.500} />
    <path d="M535.500 474.500L576.500 491.500L535.500 508.500Z" fill="url(#g2)" stroke="#666a70" /><T x={538} y={496} w={16} s={12.5} fill="#000">20</T>
    <Blk x={505.5} y={547.5} w={34} h={34} g="g2" /><path d="M506 553.500H517L532.500 564.500H540M506 564.500H512.500M512.500 561V568M506 576.500H517" stroke="#000" fill="none" /><path d="M517 576.500L532 565" stroke="#000" strokeDasharray="1.500 1.500" />
    <Blk x={463.5} y={580.5} w={14} h={22} g="g2" /><T x={466} y={596} w={8} fill="#000">0</T>
    <Blk x={566.5} y={546.5} w={33} h={37} g="g2" /><T x={577} y={561} w={12} fill="#000">Ts</T><Wire d="M569.500 564.500H596.500" /><T x={573} y={576} w={18} fill="#000">z-1</T>
    <circle cx="610.500" cy="524.500" r="10" fill="url(#g2)" stroke="#666a70" /><path d="M607.500 521.500H613.500M610.500 518.500V524.500M607.500 527.500H613.500M610.500 524.500V530.500" stroke="#000" />
    <Head x={566} y={564.5} /><Head x={610.5} y={515} to="d" /><Head x={610.5} y={534.500} to="u" />
    <Dot x={642.5} y={524.5} /><Dot x={702.5} y={524.5} /><Head x={661} y={524.5} /><Head x={739} y={524.5} />
    <Blk x={661.5} y={513.5} w={21} h={22} g="g2" /><path d="M665 530H669L675 519H679.500M665 524.500H679.500M672 517V532" stroke="#222" fill="none" />
    <Blk x={658.5} y={566.5} w={27} h={22} g="g2" /><path d="M679 566.500H685.500V574Z" fill="#aaa" stroke="#555" /><T x={663} y={583} w={18} fill="#000">==</T>
    <Head x={665.5} y={566.5} to="d" /><Head x={678.5} y={566.5} to="d" />
  </Canvas>
);

const ProcessDiagram = () => (
  <Canvas width="466" height="179" viewBox="870 462 466 179">
    <BlueGrad id="g3" />
    <Wire d="M1011 528.500H1037M1077 528.500H1121M1141 528.500H1193M1130.500 575V540" />
    <Port x={977.500} y={529.500} g="g3" /><Port x={1193.500} y={529.500} g="g3" out />
    <Blk x={1037.500} y={510.500} w={39} h={37} g="g3" /><T x={1046} y={525} w={20} s={12.5} fill="#000">0.2</T><Wire d="M1041 528.500H1073" /><T x={1040} y={541} w={32} s={12.5} fill="#000">5s+1</T>
    <circle cx="1131" cy="529" r="9.700" fill="url(#g3)" stroke="#666a70" /><path d="M1124.500 526.500H1130.500M1127.500 523.500V529.500M1127.500 531.500H1133.500M1130.500 528.500V534.500" stroke="#000" />
    <Blk x={1119.500} y={575.500} w={23} h={21} g="g3" /><T x={1122} y={590} w={16} s={12.5} fill="#000">20</T>
    <Head x={1037} y={528.500} /><Head x={1121} y={528.500} /><Head x={1193} y={528.500} /><Head x={1130.500} y={539} to="u" />
    <T x={975} y={559} w={36}>Power</T><T x={1171} y={559} w={76}>Temperature</T>
  </Canvas>
);

const seq = (n) => Array.from({ length: n }, (_, i) => i);
const ScopeChart = () => (
  <Canvas width="1082" height="239" viewBox="283 701 1082 239">
    <text x="824" y="729" fontSize="21" fontWeight="bold" textAnchor="middle" textLength="72">Scope</text>
    <g stroke="#d3d3d3" strokeDasharray="3 1" shapeRendering="crispEdges">
      {seq(8).map((i) => <path key={i} d={`M330 ${762.5 + Math.floor(i * 19.9)}H1343`} />)}
      {seq(20).map((i) => <path key={i} d={`M${Math.round(328.6 + (i + 1) * 50.7) + 0.5} 763V908`} />)}
    </g>
    <path d="M322.500 762V902M329 908.500H1343" stroke="#000" />
    {seq(8).map((i) => {
      const y = 762.5 + Math.floor(i * 19.9);
      return <g key={i}><path d={`M318 ${y}H327`} stroke="#aaa" /><text x="312" y={y + 5.500} fontSize="16" textAnchor="end" textLength="20">{32 - 2 * i}</text></g>;
    })}
    {seq(21).map((i) => {
      const x = 328.3 + i * 50.7;
      return <g key={i}><path d={`M${Math.round(x + 0.3) + 0.5} 904V913`} stroke="#aaa" /><text x={x} y="929" fontSize="16" textAnchor="middle" textLength={i > 9 ? 20 : 10}>{i}</text></g>;
    })}
    <polyline fill="none" stroke="#1616e8" strokeWidth="1" shapeRendering="crispEdges" points="329,881.5 355,881.5 368,880 380,877 392,872 402,867 414,858 431,846 443,837 455,829 468,822 482,816 496,810.500 510,806 532,800.500 560,795.500 583,792 607,789.500 632,787.500 660,786 685,785.500 690,784.500 733,784.500 735,783.500 809,783.500 810,782.500 1204,782.500 1206,781.500 1272,781.500" />
    <path d="M329 881.500H357M735 783.500H809M1206 781.500H1272" stroke="#111144" strokeDasharray="12 2" />
  </Canvas>
);

const tools = (list) => list.map((t, i) => t === "|" ? <Sep key={i} /> : (
  <Tool key={i} $menu={t[1]} $off={t[2]}>{I[t[0]]}{t[1] ? <Down off={t[2]} /> : null}</Tool>
));

export default function App() {
  return (
    <Window>
      <Global />
      <TitleBar>
        <WindowButtons>
          <RoundButton $close><Icon w={14} h={14}><path d="M4.500 4.500L9.500 9.500M9.500 4.500L4.500 9.500" stroke="#5a2a18" strokeWidth="1.600" /></Icon></RoundButton>
          <RoundButton><Icon w={14} h={14}><path d="M3.500 5.500L7 9L10.500 5.500" stroke="#5b5952" strokeWidth="1.600" /></Icon></RoundButton>
          <RoundButton><Icon w={14} h={14}><path d="M3.500 8.500L7 5L10.500 8.500" stroke="#5b5952" strokeWidth="1.600" /></Icon></RoundButton>
        </WindowButtons>
        <span>C/C++ - pi-demo/model/System.blockdiagram - Eclipse SDK</span>
      </TitleBar>
      <MenuBar>
        <MenuItem $w={33}>File</MenuItem><MenuItem $w={35}>Edit</MenuItem><MenuItem $w={54}>Source</MenuItem>
        <MenuItem $w={64}>Refac<u>t</u>or</MenuItem><MenuItem $w={66}><u>D</u>iagram</MenuItem><MenuItem $w={69}>Navigate</MenuItem>
        <MenuItem $w={54}>Se<u>a</u>rch</MenuItem><MenuItem $w={55}>Project</MenuItem><MenuItem $w={34}>Run</MenuItem>
        <MenuItem $w={62}>Window</MenuItem><MenuItem $w={40}>Help</MenuItem>
      </MenuBar>

      <ToolArea>
        <PerspectiveEdge width="1410" height="79" fill="none">
          <defs><linearGradient id="edge" gradientUnits="userSpaceOnUse" x1="960" x2="1200"><stop stopColor="#fff" stopOpacity="0" /><stop offset="1" stopColor="#fff" /></linearGradient></defs>
          <path d="M960 76.500H1209C1232 76 1228 3 1252 2.500H1410" stroke="url(#edge)" strokeWidth="1.300" />
        </PerspectiveEdge>
        <ToolRow>
          <ToolGroup $w={154}><Grip $gap={11} />{tools([["new", 33], ["save", 0, 1], ["saveAll", 0, 1], ["print", 0, 1], "|", ["bin"]])}</ToolGroup>
          <ToolGroup $w={148}><Grip $gap={11} />{tools([["cProj", 33], ["cFolder", 32], ["cFile", 32], ["cClass", 32]])}</ToolGroup>
          <ToolGroup $w={82}><Grip />{tools([["hammer", 32, 1], ["world", 32, 1]])}</ToolGroup>
          <ToolGroup $w={148}><Grip $gap={11} />{tools([["bug", 32], ["run", 32], ["runHist", 32], ["runExt", 32]])}</ToolGroup>
          <ToolGroup $w={124}><Grip $gap={11} />{tools([["openType"], ["openTask"], ["openRes"], ["torch", 32]])}</ToolGroup>
          <ToolGroup $w={68}><Grip $gap={12} />{tools([["block", 0, 1], ["para", 0, 1]])}</ToolGroup>
          <ToolGroup $w={60}><Grip $gap={12} />{tools([["sphere"]])}</ToolGroup>
          <PerspectiveBar>
            {I.openPersp}
            <PerspectiveButton>{I.cPersp}C/C++</PerspectiveButton>
            <Chevron>»</Chevron>
          </PerspectiveBar>
        </ToolRow>
        <ToolRow>
          <ToolGroup $w={952}>
            <Grip $gap={9} />
            <ComboBox $w={216} $gap={3}><ComboText>Sans</ComboText><ComboDrop $w={22}><Down off /></ComboDrop></ComboBox>
            <ComboBox $w={52} $gap={6}><ComboText>9</ComboText><ComboDrop $w={22}><Down off /></ComboDrop></ComboBox>
            {tools([["bold", 0, 1], ["italic", 0, 1], "|", ["fontA", 32, 1], ["fill", 32, 1], ["brush", 32, 1], ["lineStyle", 32], "|", ["copyApp", 0, 1], "|", ["select", 32], ["arrange", 32], ["align", 32], "|", ["autosize", 0, 1], "|", ["route1", 0, 1], ["route2", 0, 1], ["compart", 32], ["routing", 32], "|"])}
            <ComboBox $w={187} $gap={0} $flat><ComboText>100%</ComboText><ComboDrop $w={27}><Down off /></ComboDrop></ComboBox>
          </ToolGroup>
          <ToolGroup $w={180}><Grip />{tools([["nextAnn", 32, 1], ["prevAnn", 32, 1], ["lastEdit", 0, 1], ["back", 32], ["forward", 32, 1]])}</ToolGroup>
        </ToolRow>
      </ToolArea>

      <Workbench>
        <Folder $w={272} $h={810}>
          <TabBar>
            <Tab $w={56} $pad={3}>{I.proj}<span>Proj</span></Tab>
            <Tab $w={59} $side="left" $pad={3}>{I.navi}<span>Navi</span></Tab>
            <ActiveTab w={80} flat={64} pad={4} tone="tan" icon={I.view} label="Bloc" closeGap={6} />
            <FolderButtons><MinIcon /><MaxIcon /></FolderButtons>
          </TabBar>
          <Body $tone={C.tan}>
            <Column $w={250}>
              <Tree>
                <TreeRows>
                  {TREE.map(([level, kind, label]) => {
                    const branch = kind === "-" || kind === "+";
                    return (
                      <TreeRow key={level + label} $level={level} $on={kind === "transfer"}>
                        <Expander $none={!branch}>
                          {branch && <Icon w={9} h={9}><path d={kind === "-" ? "M1 4.500H8" : "M1 4.500H8M4.500 1V8"} stroke="#333" /></Icon>}
                        </Expander>
                        {branch ? <FolderOpen /> : B[kind]}
                        {label}
                      </TreeRow>
                    );
                  })}
                </TreeRows>
              </Tree>
              <Scroll size={204} offA />
            </Column>
            <Column $w={16}><Scroll v len={753} at={12} size={687} /></Column>
          </Body>
        </Folder>

        <Center>
          <Folder $w={1088} $h={288}>
            <TabBar>
              <ActiveTab w={230} flat={175} tone="white" icon={I.diagram} label="System.blockdiagram" closeGap={4} first />
              <FolderButtons><MinIcon /><MaxIcon /></FolderButtons>
            </TabBar>
            <Body $tone="#fff">
              <Column $w={893}><SystemDiagram /><Scroll size={853} offA offB /></Column>
              <Bar $v><Scroll v len={231} size={191} offA /></Bar>
              <PaletteBox>
                <PaletteTitle>{I.palette}<span>Palette</span><Icon w={7} h={13}><path d="M1 .8V12.200L6 6.500Z" fill="#fff" stroke="#000" /></Icon></PaletteTitle>
                <PaletteTools><PressedTool>{I.cursor}</PressedTool>{I.zoomIn}{I.zoomOut}{I.note}<SmallDown /></PaletteTools>
                <Drawer $h={99}>
                  <DrawerTitle><FolderOpen /><span>General</span><Pin /></DrawerTitle>
                  <PaletteItem $mt={1}>{I.connection}Connection</PaletteItem>
                  <PaletteRule />
                  <PaletteItem $mt={1}>{I.port}Inport</PaletteItem>
                  <PaletteItem>{I.port}Outport</PaletteItem>
                  <DrawerScroll><SmallDown /></DrawerScroll>
                </Drawer>
                <Drawer $h={99}>
                  <DrawerTitle><FolderOpen /><span>Common Blocks</span><Pin /></DrawerTitle>
                  <PaletteItem $mt={1}>{B.constant}Constant</PaletteItem>
                  <PaletteItem>{B.step}Step</PaletteItem>
                  <PaletteItem>{B.scope}Scope</PaletteItem>
                  <DrawerScroll><SmallDown /></DrawerScroll>
                </Drawer>
              </PaletteBox>
            </Body>
          </Folder>

          <SideBySide>
            <Folder $w={584} $h={236}>
              <TabBar><ActiveTab w={200} flat={139} tone="plain" icon={I.diagram} label="PI.blockdiagram" closeGap={4} first /></TabBar>
              <Body $tone={C.bg}>
                <Column $w={549}><PIDiagram /><Scroll size={509} offA offB /></Column>
                <Scroll v len={179} size={136} offA />
                <Flyout><FlyoutButton><Icon w={7} h={13}><path d="M6 .8V12.200L1 6.500Z" fill="#fff" stroke="#000" /></Icon></FlyoutButton></Flyout>
              </Body>
            </Folder>
            <Folder $w={501} $h={236}>
              <TabBar><ActiveTab w={220} flat={177} tone="plain" icon={I.diagram} label="Process.blockdiagram" closeGap={4} first /></TabBar>
              <Body $tone={C.bg}>
                <Column $w={466}><ProcessDiagram /><Scroll at={17} size={409} offB /></Column>
                <Scroll v len={179} at={13} size={126} offB />
                <Flyout><FlyoutButton><Icon w={7} h={13}><path d="M6 .8V12.200L1 6.500Z" fill="#fff" stroke="#000" /></Icon></FlyoutButton></Flyout>
              </Body>
            </Folder>
          </SideBySide>

          <Folder $w={1088} $h={280}>
            <TabBar>
              <Tab $w={88}>{I.problems}<span>Problems</span></Tab>
              <Tab $w={64} $side="left">{I.tasks}<span>Tasks</span></Tab>
              <Tab $w={80} $side="left">{I.console}<span>Console</span></Tab>
              <Tab $w={94} $side="left">{I.props}<span>Properties</span></Tab>
              <ActiveTab w={138} flat={105} pad={4} tone="plain" icon={I.sim} label="Simulation" closeGap={4} />
              <Tab $w={85} $side="right">{I.error}<span>Error Log</span></Tab>
              <Tab $w={148} $side="right" $pad={4}>{I.view}<span>Fragment Explorer</span></Tab>
              <Tab $w={72} $side="right" $pad={4}>{I.torch}<span>Search</span></Tab>
              <Tab $w={84} $side="right" $pad={4}>{I.progress}<span>Progress</span></Tab>
              <FolderButtons>
                <Icon w={19} h={14}><path d="M.5 2.500H10.500V12.500H.5Z" stroke="#c9c2b8" /><path d="M2.500 4.500H8.500V10.500H2.500Z" fill="#c9bfb9" stroke="#bdb3ab" /></Icon>
                <MinIcon /><MaxIcon />
              </FolderButtons>
            </TabBar>
            <Body $tone={C.bg}><ScopeChart /></Body>
          </Folder>
        </Center>

        <Trim>
          <TrimGrip />
          <TrimItem>{I.restore}</TrimItem><TrimItem>{I.outline}</TrimItem><TrimItem>{I.target}</TrimItem><TrimItem>{I.doc}</TrimItem>
        </Trim>
      </Workbench>

      <StatusBar>
        <StatusGrip />
        <StatusSlot><Icon><path d="M1.500 4H6.500V14.500H1.500Z" fill="#f4fbff" stroke="#6b6552" /><path d="M1 3H7V6H1Z" fill="#3b7fc4" /><Spark x={11} y={4} /></Icon></StatusSlot>
        <StatusGrip />
      </StatusBar>
    </Window>
  );
}
